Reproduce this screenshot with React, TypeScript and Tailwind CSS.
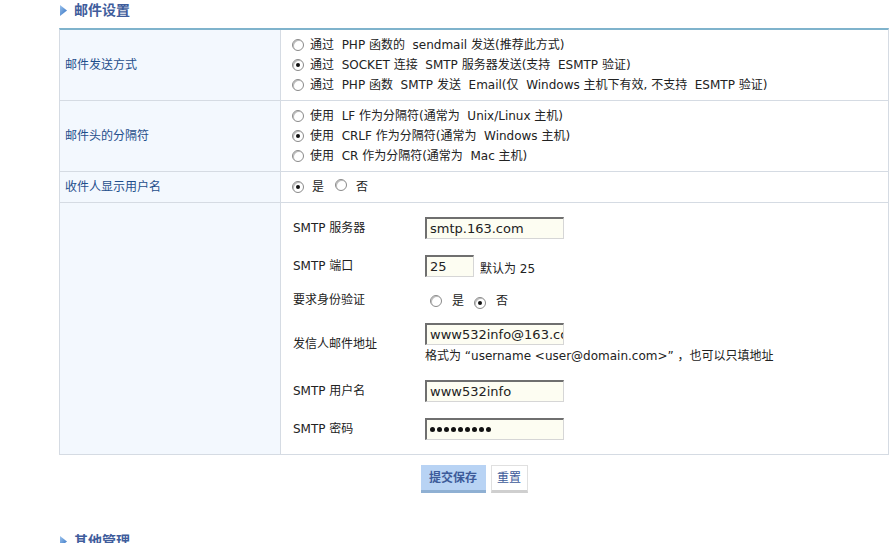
import React from "react";

const font = { fontFamily: '"DejaVu Sans", "Noto Sans CJK SC", sans-serif' };

function Radio({ checked }: { checked?: boolean }) {
  return (
    <span className="inline-flex w-[12px] h-[12px] rounded-full border border-[#8a8a8a] bg-white items-center justify-center shrink-0 shadow-[inset_1px_1px_0_#bdbdbd]">
      {checked ? <span className="w-[4px] h-[4px] rounded-full bg-[#111]" /> : null}
    </span>
  );
}

function RadioLine({ checked, text }: { checked?: boolean; text: string }) {
  return (
    <div className="flex items-center h-[20px] gap-[6px]">
      <Radio checked={checked} />
      <span className="whitespace-pre">{text}</span>
    </div>
  );
}

function Input({ value, w, pwd }: { value: string; w: string; pwd?: boolean }) {
  return (
    <div
      className={`${w} h-[22px] bg-[#fdfdf2] border-t-2 border-l-2 border-t-[#6f6f6f] border-l-[#6f6f6f] border-b border-r border-b-[#d6d6d6] border-r-[#d6d6d6] flex items-center pl-[3px] overflow-hidden text-[13px] text-[#222] whitespace-nowrap`}
    >
      {pwd ? (
        <div className="flex gap-[2px]">
          {Array.from({ length: 9 }).map((_, i) => (
            <span key={i} className="w-[5px] h-[5px] rounded-full bg-[#111]" />
          ))}
        </div>
      ) : (
        value
      )}
    </div>
  );
}

function Heading({ text }: { text: string }) {
  return (
    <div className="flex items-center h-[20px] pl-[60px] gap-[7px]">
      <svg width="7" height="11" viewBox="0 0 7 11">
        <defs>
          <linearGradient id="tg" x1="0" x2="1" y1="0" y2="1">
            <stop offset="0" stopColor="#9cc3ee" />
            <stop offset="1" stopColor="#2f6fc0" />
          </linearGradient>
        </defs>
        <path d="M0 0 L7 5.5 L0 11 Z" fill="url(#tg)" />
      </svg>
      <span className="text-[14px] font-bold text-[#3f5d9c]">{text}</span>
    </div>
  );
}

export default function App() {
  return (
    <div className="w-[891px] h-[543px] overflow-hidden bg-white text-[12px] text-[#222]" style={font}>
      <Heading text="邮件设置" />
      <div className="ml-[59px] w-[830px] mt-[8px] border-t-2 border-t-[#7fb3cc] border-l border-r border-b border-[#d5dbe3]">
        {/* row 1 */}
        <div className="flex border-b border-[#d5dbe3]">
          <div className="w-[221px] shrink-0 bg-[#f3f8fe] border-r border-[#d5dbe3] flex items-center pl-[5px] text-[#1f4f8c]">
            邮件发送方式
          </div>
          <div className="flex-1 pl-[11px] py-[5px]">
            <RadioLine text="通过  PHP 函数的  sendmail 发送(推荐此方式)" />
            <RadioLine checked text="通过  SOCKET 连接  SMTP 服务器发送(支持  ESMTP 验证)" />
            <RadioLine text="通过  PHP 函数  SMTP 发送  Email(仅  Windows 主机下有效, 不支持  ESMTP 验证)" />
          </div>
        </div>
        {/* row 2 */}
        <div className="flex border-b border-[#d5dbe3]">
          <div className="w-[221px] shrink-0 bg-[#f3f8fe] border-r border-[#d5dbe3] flex items-center pl-[5px] text-[#1f4f8c]">
            邮件头的分隔符
          </div>
          <div className="flex-1 pl-[11px] py-[5px]">
            <RadioLine text="使用  LF 作为分隔符(通常为  Unix/Linux 主机)" />
            <RadioLine checked text="使用  CRLF 作为分隔符(通常为  Windows 主机)" />
            <RadioLine text="使用  CR 作为分隔符(通常为  Mac 主机)" />
          </div>
        </div>
        {/* row 3 */}
        <div className="flex border-b border-[#d5dbe3] h-[31px]">
          <div className="w-[221px] shrink-0 bg-[#f3f8fe] border-r border-[#d5dbe3] flex items-center pl-[5px] text-[#1f4f8c]">
            收件人显示用户名
          </div>
          <div className="flex-1 pl-[11px] flex items-center">
            <Radio checked />
            <span className="ml-[8px]">是</span>
            <span className="ml-[11px]"><Radio /></span>
            <span className="ml-[9px]">否</span>
          </div>
        </div>
        {/* row 4 */}
        <div className="flex">
          <div className="w-[221px] shrink-0 bg-[#f3f8fe] border-r border-[#d5dbe3]" />
          <div className="flex-1 pl-[12px] pt-[6px] pb-[6px]">
            <div className="flex items-center py-[8px]">
              <div className="w-[132px]">SMTP 服务器</div>
              <Input w="w-[139px]" value="smtp.163.com" />
            </div>
            <div className="flex items-center py-[8px]">
              <div className="w-[132px]">SMTP 端口</div>
              <Input w="w-[49px]" value="25" />
              <span className="ml-[6px] relative top-[3px]">默认为 25</span>
            </div>
            <div className="flex items-center h-[30px]">
              <div className="w-[132px]">要求身份验证</div>
              <div className="flex items-center pl-[5px] mt-[2px]">
                <Radio />
                <span className="ml-[10px]">是</span>
                <span className="ml-[10px]"><Radio checked /></span>
                <span className="ml-[10px]">否</span>
              </div>
            </div>
            <div className="flex items-center py-[8px]">
              <div className="w-[132px]">发信人邮件地址</div>
              <div className="flex flex-col">
                <Input w="w-[139px]" value="www532info@163.com" />
                <div className="h-[16px] flex items-center mt-[3px]">格式为 “username &lt;user@domain.com&gt;” ，也可以只填地址</div>
              </div>
            </div>
            <div className="flex items-center py-[8px]">
              <div className="w-[132px]">SMTP 用户名</div>
              <Input w="w-[139px]" value="www532info" />
            </div>
            <div className="flex items-center py-[8px]">
              <div className="w-[132px]">SMTP 密码</div>
              <Input w="w-[139px]" value="" pwd />
            </div>
          </div>
        </div>
      </div>
      <div className="ml-[59px] w-[830px] flex justify-center gap-[5px] mt-[10px]">
        <button className="w-[65px] h-[28px] bg-[#b8d3f4] border-b-[3px] border-b-[#8fb0d3] text-[#3d5b9a] font-bold text-[12px]">
          提交保存
        </button>
        <button className="w-[37px] h-[28px] bg-white border border-[#e0e0e0] border-b-[3px] border-b-[#cfcfcf] text-[#3d5b9a] text-[12px]">
          重置
        </button>
      </div>
      <div className="mt-[38px]">
        <Heading text="其他管理" />
      </div>
    </div>
  );
}
